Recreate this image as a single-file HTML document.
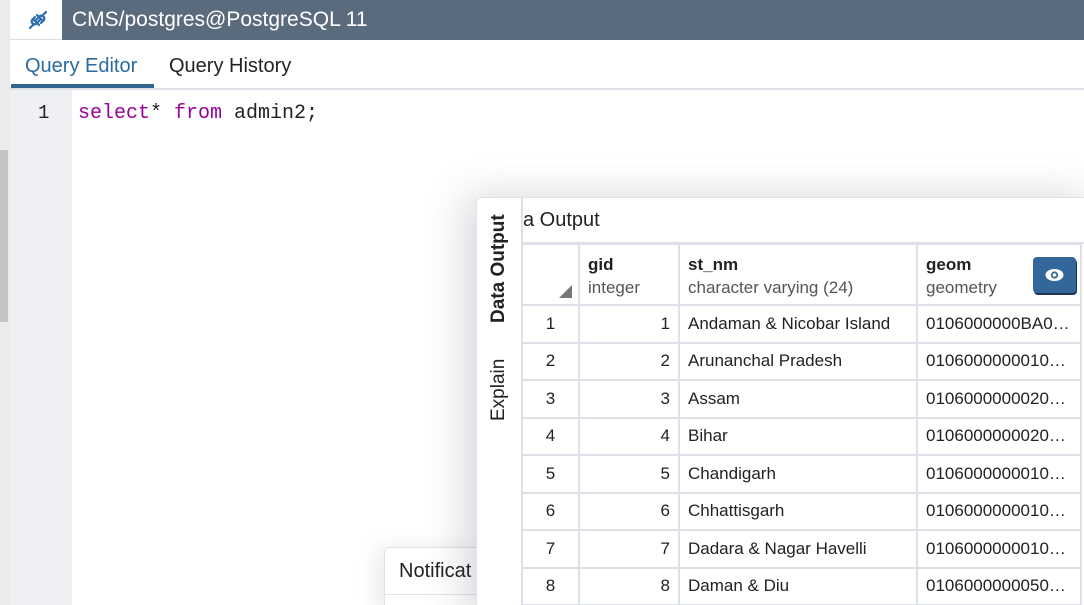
<!DOCTYPE html>
<html><head><style>
*{margin:0;padding:0;box-sizing:border-box}
html,body{width:1084px;height:605px;overflow:hidden}
body{background:#fff;font-family:"Liberation Sans",Roboto,sans-serif;position:relative;color:#222}
.abs{position:absolute}
table{border-collapse:collapse;font-size:17px;color:#222}
td{border:2px solid #dde0e6;height:37.5px;padding:0 8px;white-space:nowrap}
</style></head><body>
<div class="abs" style="left:0;top:0;width:10px;height:605px;background:#ebebeb"></div>
<div class="abs" style="left:0;top:150px;width:8px;height:172px;background:#c4c4c4"></div>
<div class="abs" style="left:10px;top:0;width:52px;height:40px;background:#fff;border-bottom:1px solid #ddd"></div>
<svg class="abs" style="left:26px;top:8px" width="24" height="24" viewBox="0 0 24 24" fill="none" stroke="#2b6cb0" stroke-width="2.2" stroke-linecap="round"><path d="M4 20l4-4M20 4l-4 4M7 11l6 6M11 7l6 6M9 9l-3 3a3 3 0 004 4l1-1M15 15l3-3a3 3 0 00-4-4l-1 1M10 12l2-2M12 14l2-2"/></svg>
<div class="abs" style="left:62px;top:0;width:1022px;height:40px;background:#5b6b7e;color:#fff;font-size:21px;line-height:40px;padding-left:10px">CMS/postgres@PostgreSQL 11</div>
<div class="abs" style="left:10px;top:40px;width:1074px;height:50px;border-bottom:2px solid #dde0e6"></div>
<div class="abs" style="left:25px;top:55px;font-size:20px;color:#2c6aa0">Query Editor</div>
<div class="abs" style="left:11px;top:84px;width:143px;height:4px;background:#326690"></div>
<div class="abs" style="left:169px;top:55px;font-size:20px;color:#222">Query History</div>
<div class="abs" style="left:10px;top:90px;width:62px;height:515px;background:#eef0f4"></div>
<div class="abs" style="left:38px;top:102px;font-size:19px;font-family:'Liberation Mono',monospace">1</div>
<div class="abs" style="left:78px;top:102px;font-size:20px;font-family:'Liberation Mono',monospace;color:#222"><span style="color:#990099">select</span>* <span style="color:#990099">from</span> admin2;</div>
<div class="abs" style="left:384px;top:547px;width:100px;height:70px;background:#fff;border:1px solid #e3e3e3;border-radius:5px;box-shadow:-8px 0 20px rgba(0,0,0,.08)"></div>
<div class="abs" style="left:384px;top:594px;width:100px;height:1px;background:#e3e3e3"></div>
<div class="abs" style="left:399px;top:560px;font-size:20px;color:#222">Notificat</div>
<div class="abs" style="left:476px;top:197px;width:620px;height:420px;background:#fff;border:1px solid #e3e3e3;border-radius:5px;box-shadow:-10px 0 40px rgba(60,70,90,.22)"></div>
<div class="abs" style="left:521px;top:197px;width:2px;height:408px;background:#dde0e6"></div>
<div class="abs" style="left:488px;top:323px;transform:rotate(-90deg);transform-origin:0 0;font-size:19px;font-weight:bold;width:120px">Data Output</div>
<div class="abs" style="left:488px;top:421px;transform:rotate(-90deg);transform-origin:0 0;font-size:19px;width:80px">Explain</div>
<div class="abs" style="left:523px;top:209px;font-size:20px">a Output</div>
<div class="abs" style="left:523px;top:242px;width:561px;height:2px;background:#dde0e6"></div>
<table class="abs" style="left:521px;top:243px">
<tr style="height:61px"><td style="width:57px;position:relative"><div style="position:absolute;right:6px;bottom:6px;width:0;height:0;border-left:13px solid transparent;border-bottom:13px solid #777"></div></td>
<td style="width:100px;line-height:23px;padding-top:2px"><b>gid</b><br><span style="color:#555">integer</span></td>
<td style="width:238px;line-height:23px;padding-top:2px"><b>st_nm</b><br><span style="color:#555">character varying (24)</span></td>
<td style="width:164px;line-height:23px;padding-top:2px;position:relative"><b>geom</b><br><span style="color:#555">geometry</span><div style="position:absolute;left:115px;top:12px;width:43px;height:36px;background:#336799;border-radius:4px;box-shadow:1px 2px 0 #1d3550"><svg width="43" height="36" viewBox="0 0 43 36"><ellipse cx="21.5" cy="18" rx="9" ry="6" fill="#fff"/><circle cx="21.5" cy="18" r="3.6" fill="#336799"/><circle cx="21.5" cy="18" r="1.8" fill="#fff"/></svg></div></td></tr>
<tr><td style="text-align:center">1</td><td style="text-align:right">1</td><td>Andaman &amp; Nicobar Island</td><td>0106000000BA0…</td></tr>
<tr><td style="text-align:center">2</td><td style="text-align:right">2</td><td>Arunanchal Pradesh</td><td>0106000000010…</td></tr>
<tr><td style="text-align:center">3</td><td style="text-align:right">3</td><td>Assam</td><td>0106000000020…</td></tr>
<tr><td style="text-align:center">4</td><td style="text-align:right">4</td><td>Bihar</td><td>0106000000020…</td></tr>
<tr><td style="text-align:center">5</td><td style="text-align:right">5</td><td>Chandigarh</td><td>0106000000010…</td></tr>
<tr><td style="text-align:center">6</td><td style="text-align:right">6</td><td>Chhattisgarh</td><td>0106000000010…</td></tr>
<tr><td style="text-align:center">7</td><td style="text-align:right">7</td><td>Dadara &amp; Nagar Havelli</td><td>0106000000010…</td></tr>
<tr><td style="text-align:center">8</td><td style="text-align:right">8</td><td>Daman &amp; Diu</td><td>0106000000050…</td></tr>
</table>
</body></html>
